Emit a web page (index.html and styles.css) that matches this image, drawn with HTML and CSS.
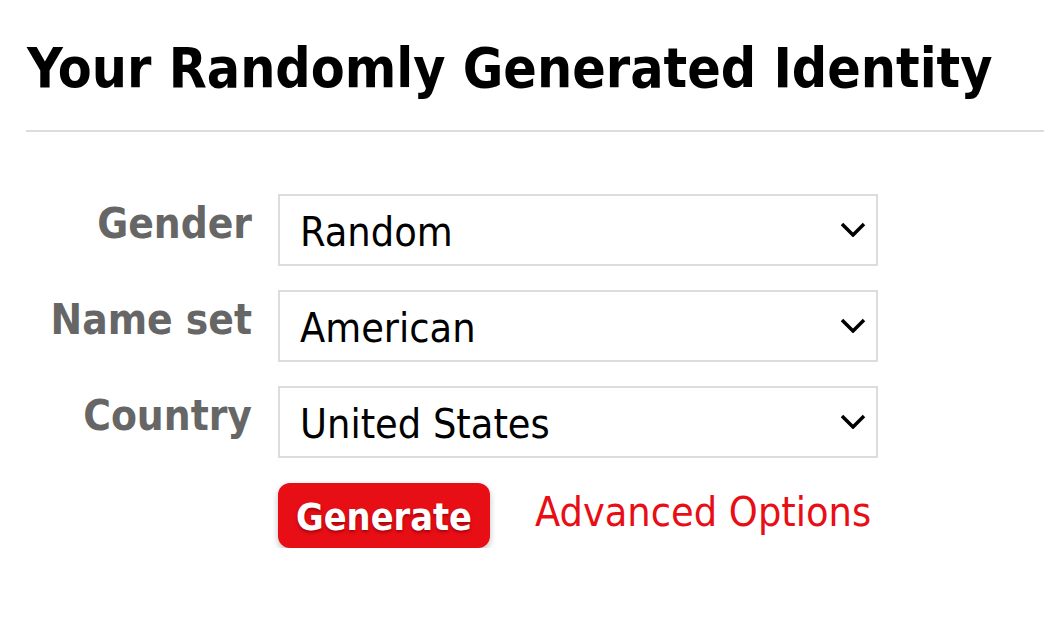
FILE: index.html
```html
<!DOCTYPE html>
<html lang="en">
<head>
  <meta charset="UTF-8">
  <title>Random Identity Generator</title>
  <link rel="stylesheet" href="styles.css">
</head>
<body>
  <div class="page">
    <h1>Your Randomly Generated Identity</h1>
    <hr class="rule">

    <form class="identity-form">
      <label class="field-label" for="gender">Gender</label>
      <div class="select-wrap">
        <select id="gender">
          <option>Random</option>
          <option>Male</option>
          <option>Female</option>
        </select>
        <svg class="chevron" viewBox="0 0 26 15" aria-hidden="true"><path d="M2 2 L13 13 L24 2" /></svg>
      </div>

      <label class="field-label" for="nameset">Name set</label>
      <div class="select-wrap">
        <select id="nameset">
          <option>American</option>
        </select>
        <svg class="chevron" viewBox="0 0 26 15" aria-hidden="true"><path d="M2 2 L13 13 L24 2" /></svg>
      </div>

      <label class="field-label" for="country">Country</label>
      <div class="select-wrap">
        <select id="country">
          <option>United States</option>
        </select>
        <svg class="chevron" viewBox="0 0 26 15" aria-hidden="true"><path d="M2 2 L13 13 L24 2" /></svg>
      </div>

      <div class="actions">
        <button type="button" class="button">Generate</button>
        <a href="#" class="advanced">Advanced Options</a>
      </div>
    </form>
  </div>
</body>
</html>
```

FILE: styles.css
```css
:root {
  --red: #e80e15;
  --gray-label: #666666;
  --border: #dcdcdc;
}

* {
  margin: 0;
  padding: 0;
  box-sizing: border-box;
}

body {
  font-family: Tahoma, "DejaVu Sans Condensed", "DejaVu Sans", sans-serif;
  background-color: white;
  color: black;
}

.page {
  padding: 28px 0 0 26px;
}

h1 {
  font-size: 55px;
  font-weight: bold;
  line-height: 80px;
  padding-left: 1px;
}

.rule {
  border: none;
  border-top: 2px solid var(--border);
  margin-top: 22px;
}

.identity-form {
  display: grid;
  grid-template-columns: 226px 600px;
  column-gap: 26px;
  row-gap: 24px;
  margin-top: 62px;
}

.field-label {
  text-align: right;
  color: var(--gray-label);
  font-weight: bold;
  font-size: 42px;
  line-height: 60px;
}

.select-wrap {
  position: relative;
}

.select-wrap select {
  appearance: none;
  -webkit-appearance: none;
  width: 100%;
  height: 72px;
  border: 2px solid var(--border);
  border-radius: 0;
  background: white;
  font-family: inherit;
  font-size: 41px;
  color: black;
  padding: 4px 60px 0 20px;
}

.chevron {
  position: absolute;
  right: 12px;
  top: 28px;
  width: 26px;
  height: 15px;
  fill: none;
  stroke: black;
  stroke-width: 3.5;
  pointer-events: none;
}

.actions {
  grid-column: 2;
  display: flex;
  align-items: center;
  gap: 45px;
  margin-top: 1px;
}

.button {
  background-color: var(--red);
  color: white;
  font-family: inherit;
  font-weight: bold;
  font-size: 37.5px;
  border: none;
  border-radius: 12px;
  width: 212px;
  height: 65px;
  padding: 2px 0 0;
  text-shadow: 0 2px 3px rgba(90, 0, 0, 0.5);
  box-shadow: 0 3px 6px rgba(0, 0, 0, 0.25);
  cursor: pointer;
}

.advanced {
  color: var(--red);
  text-decoration: none;
  font-size: 41px;
  white-space: nowrap;
  margin-bottom: 7px;
}
```
